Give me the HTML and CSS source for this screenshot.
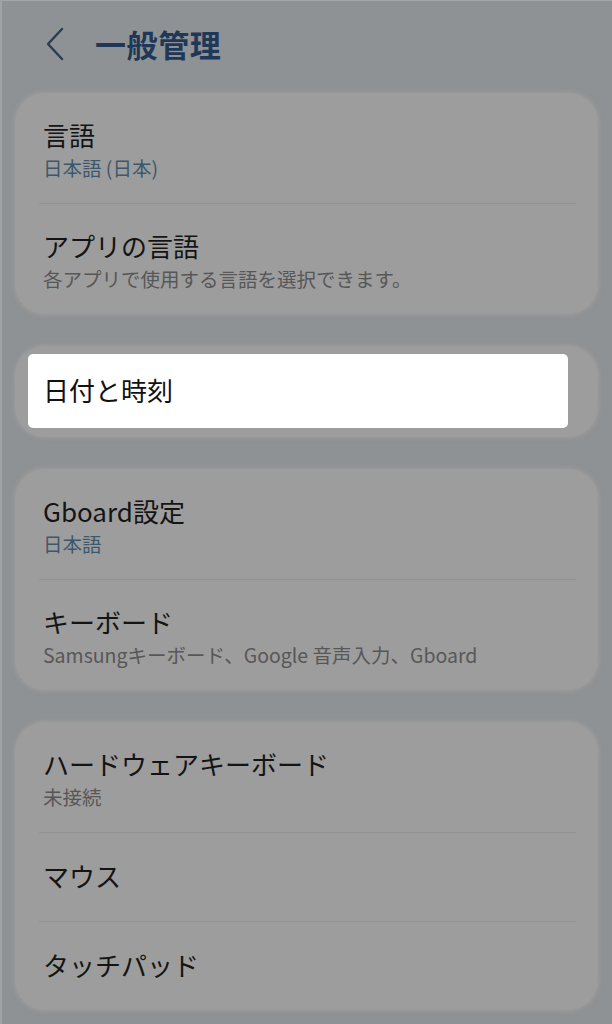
FILE: index.html
```html
<!DOCTYPE html>
<html lang="ja">
<head>
<meta charset="utf-8">
<title>一般管理</title>
<link rel="stylesheet" href="styles.css">
</head>
<body>
<div class="page">
  <header class="header">
    <svg class="back" width="24" height="34" viewBox="0 0 24 34" aria-hidden="true">
      <path d="M18 2 L4 17 L18 32" fill="none" stroke="#2b3c52" stroke-width="2.4" stroke-linecap="round" stroke-linejoin="round"/>
    </svg>
    <h1 class="title">一般管理</h1>
  </header>

  <main class="cards">
    <section class="card">
      <div class="item">
        <div class="item-title">言語</div>
        <div class="item-sub sub-blue">日本語 (日本)</div>
      </div>
      <div class="divider"></div>
      <div class="item">
        <div class="item-title">アプリの言語</div>
        <div class="item-sub sub-gray">各アプリで使用する言語を選択できます。</div>
      </div>
    </section>

    <section class="card">
      <div class="item item-single item-spot">
        <div class="spot"></div>
        <div class="item-title spot-text">日付と時刻</div>
      </div>
    </section>

    <section class="card">
      <div class="item">
        <div class="item-title">Gboard設定</div>
        <div class="item-sub sub-blue">日本語</div>
      </div>
      <div class="divider"></div>
      <div class="item">
        <div class="item-title">キーボード</div>
        <div class="item-sub sub-gray">Samsungキーボード、Google 音声入力、Gboard</div>
      </div>
    </section>

    <section class="card">
      <div class="item">
        <div class="item-title">ハードウェアキーボード</div>
        <div class="item-sub sub-gray">未接続</div>
      </div>
      <div class="divider"></div>
      <div class="item item-single">
        <div class="item-title">マウス</div>
      </div>
      <div class="divider"></div>
      <div class="item item-single">
        <div class="item-title">タッチパッド</div>
      </div>
    </section>
  </main>
</div>
</body>
</html>
```

FILE: styles.css
```css
html, body {
  margin: 0;
  padding: 0;
  background: #8f9294;
}

body {
  font-family: "Noto Sans CJK JP", "Noto Sans", "Liberation Sans", sans-serif;
  width: 612px;
  height: 1024px;
  overflow: hidden;
}

.page {
  height: 1024px;
  box-sizing: border-box;
  border-top: 1px solid #a3a5a6;
  border-left: 2px solid #a0a2a3;
}

.header {
  display: flex;
  align-items: center;
  height: 58px;
  padding-top: 14px;
  margin-bottom: 20px;
  padding-left: 42px;
}

.back {
  display: block;
  margin-right: 27px;
}

.title {
  margin: 0;
  font-size: 31px;
  font-weight: 700;
  color: #1f3858;
  line-height: 40px;
  letter-spacing: 0.6px;
}

.cards {
  display: flex;
  flex-direction: column;
  gap: 32px;
  padding: 0 14px 0 13px;
}

.card {
  background: #9d9d9d;
  border-radius: 30px;
  box-shadow: 0 0 4px 1px rgba(163, 163, 163, 0.6);
  position: relative;
}

.item {
  padding: 25px 20px 22px 28px;
}

.item-single {
  padding-top: 26px;
  padding-bottom: 28px;
}

.item-title {
  font-size: 26px;
  line-height: 34px;
  color: #141414;
}

.item-sub {
  font-size: 19.5px;
  line-height: 26px;
  margin-top: 3px;
}

.sub-blue {
  color: #3d586d;
}

.sub-gray {
  color: #575757;
}

.divider {
  height: 1px;
  background: #929292;
  margin: 0 22px 0 24px;
}

.item-spot {
  position: relative;
  padding-top: 27px;
  padding-bottom: 30px;
}

.spot {
  position: absolute;
  left: 13px;
  top: 8px;
  width: 540px;
  height: 74px;
  background: #ffffff;
  border-radius: 5px;
}

.spot-text {
  position: relative;
  color: #111111;
}
```
